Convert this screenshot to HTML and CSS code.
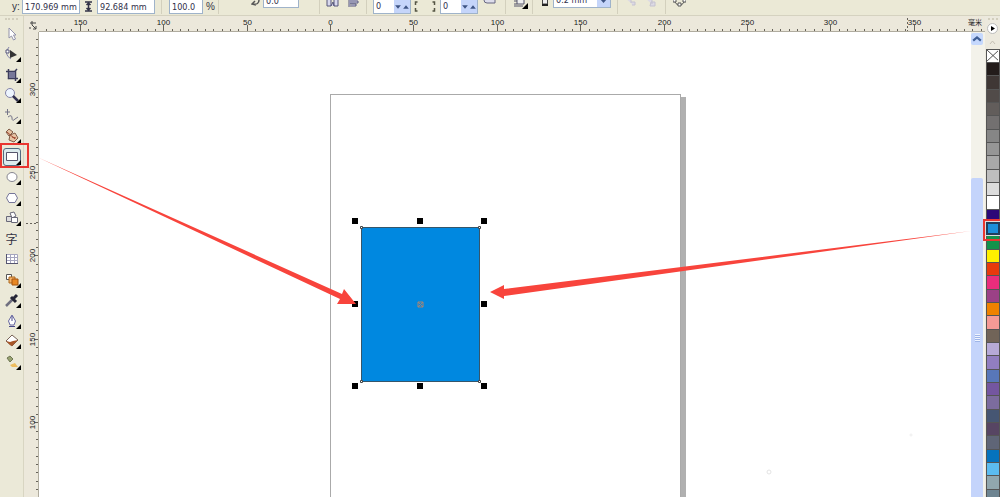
FILE: index.html
```html
<!DOCTYPE html>
<html lang="zh-CN">

<head>
    <meta charset="UTF-8">
    <meta name="viewport" content="width=device-width, initial-scale=1.0">
    <title>CorelDRAW</title>
    <link rel="stylesheet" href="styles.css">
</head>

<body>
    <header class="property-bar">
        <div class="group group-size">
            <label for="posY">y:</label>
            <input class="field" id="posY" value="170.969 mm">
            <svg class="icon-height" viewBox="0 0 9 11"><path d="M1 1h7M1 10h7M4.500 2v7M2.500 4l2-2 2 2M2.500 7l2 2 2-2" fill="none" stroke="#333348" stroke-width="1.500"/></svg>
            <input class="field" aria-label="Height" value="92.684 mm">
        </div>
        <div class="group group-scale">
            <input class="field field-scale" id="scale" value="100.0">
            <label for="scale">%</label>
        </div>
        <div class="group group-angle">
            <svg class="icon-rotate" viewBox="0 0 10 14"><path d="M2 2q6-1 6 4t-6 4M4 7l-3 3 4 1" fill="none" stroke="#555" stroke-width="1.500"/></svg>
            <input class="field field-angle" aria-label="Angle" value="0.0">
        </div>
        <div class="group group-mirror">
            <button class="bar-button" aria-label="Mirror horizontally"><svg viewBox="0 0 13 14"><path d="M1 3v8h4V3M12 3v8H8V3M5 11l2-4 1 4" fill="#d8d8ed" stroke="#57577b"/></svg></button>
            <button class="bar-button" aria-label="Mirror vertically"><svg viewBox="0 0 13 14"><path d="M2 12V4h10M3 6h8v2H3M3 11h6V9H3" fill="#d8d8ed" stroke="#57577b"/></svg></button>
        </div>
        <div class="group group-corner">
            <div class="spin">
                <input class="field" aria-label="Left corner" value="0">
                <button aria-label="Less"><svg viewBox="0 0 7 7"><path d="M1 2l2.500 3L6 2z"/></svg></button>
                <button aria-label="More"><svg viewBox="0 0 7 7"><path d="M1 5l2.500-3L6 5z"/></svg></button>
            </div>
            <svg class="icon-corners" viewBox="0 0 26 14"><path d="M5 2H3v3M3 8v3h2M20 2h2v3M22 8v3h-2" fill="none" stroke="#555544" stroke-width="1.500"/></svg>
            <div class="spin">
                <input class="field" aria-label="Right corner" value="0">
                <button aria-label="Less"><svg viewBox="0 0 7 7"><path d="M1 2l2.500 3L6 2z"/></svg></button>
                <button aria-label="More"><svg viewBox="0 0 7 7"><path d="M1 5l2.500-3L6 5z"/></svg></button>
            </div>
            <button class="bar-button" aria-label="Round together"><svg viewBox="0 0 13 14"><path d="M1 3v2q0 3 3 3h8V3z" fill="#ddddeb" stroke="#666680"/></svg></button>
        </div>
        <div class="group group-wrap">
            <button class="bar-button" aria-label="Wrap text"><svg viewBox="0 0 15 14"><path d="M1 3h12M1 6h3M1 9h3M1 11h9" stroke="#55556a"/><path d="M4 4h7v5H4z" fill="#eee" stroke="#55556a"/><path d="M15 8v6H9z"/></svg></button>
        </div>
        <div class="group group-outline">
            <svg class="icon-pen" viewBox="0 0 8 14"><path d="M1.500 10V5h5v5z" fill="#eee" stroke="#444"/><path d="M1 11h6" stroke="#222" stroke-width="2"/></svg>
            <div class="select-wrap">
                <select class="field" aria-label="Outline width"><option>0.2 mm</option></select>
                <svg viewBox="0 0 13 13"><path d="M3 5l3.500 4L10 5z"/></svg>
            </div>
        </div>
        <div class="group group-order">
            <button class="bar-button" aria-label="To front"><svg viewBox="0 0 13 14"><path d="M1 3h6v5M7 7h4v3H8" fill="#dcd9e4" stroke="#c5c2d0"/></svg></button>
            <button class="bar-button" aria-label="To back"><svg viewBox="0 0 13 14"><path d="M2 4h6v5M7 7h4v4H6z" fill="#dcd9e4" stroke="#c5c2d0"/></svg></button>
        </div>
        <div class="group group-curves">
            <button class="bar-button" aria-label="Convert to curves"><svg viewBox="0 0 13 14"><circle cx="6.500" cy="5" r="5" fill="none" stroke="#555"/><path d="M5 8h3v3H5zM0 4h3v3H0zM10 4h3v3h-3z" fill="#fff" stroke="#555"/></svg></button>
        </div>
    </header>

    <main class="workspace">
        <nav class="toolbox" aria-label="Toolbox">
            <div class="grip"></div>
            <button class="tool" aria-label="Pick"><svg viewBox="0 0 16 16"><path d="M5 2v10l2.500-2 2 4 2-1-2-4H12z" fill="#fff" stroke="#9292aa"/></svg></button>
            <button class="tool flyout" aria-label="Shape"><svg viewBox="0 0 16 16"><path d="M5 1q-6 7 2 12" fill="none" stroke="#8585aa"/><path d="M2 4h3v3H2z" fill="#fff" stroke="#555578"/><path d="M6 4v8l7-3z" fill="#333"/></svg></button>
            <button class="tool flyout" aria-label="Crop"><svg viewBox="0 0 16 16"><path d="M4.500 2v9.500H14M2 4.500h9.500V14M4 12l9-10" fill="none" stroke="#3d3d5c" stroke-width="1.500"/><path d="M5 5h6v6H5z" fill="#777799"/></svg></button>
            <button class="tool flyout" aria-label="Zoom"><svg viewBox="0 0 16 16"><circle cx="6" cy="6" r="4.500" fill="#edf5ff" stroke="#8383a8"/><path d="M9 9l5 5" stroke="#333352" stroke-width="2.500"/></svg></button>
            <button class="tool flyout" aria-label="Freehand"><svg viewBox="0 0 16 16"><path d="M1 4h5M3.500 1v6M4 9q4-3 4 1t3 1l3-2" fill="none" stroke="#747488"/></svg></button>
            <button class="tool flyout" aria-label="Smart fill"><svg viewBox="0 0 16 16"><path d="M2 4l3-3 4 3-4 4zM6 7l5-2 3 5-4 4-5-2z" fill="#e7c4a4" stroke="#805c48"/><path d="M3 4l8 7M8 9l4 1" stroke="#a04730"/></svg></button>
            <button class="tool flyout selected" aria-label="Rectangle"><svg viewBox="0 0 16 16"><path d="M2.500 3.500h11v8h-11z" fill="#fff" stroke="#55556c"/></svg></button>
            <button class="tool flyout" aria-label="Ellipse"><svg viewBox="0 0 16 16"><ellipse cx="8" cy="8" rx="5" ry="4.500" fill="#fff" stroke="#85858f"/></svg></button>
            <button class="tool flyout" aria-label="Polygon"><svg viewBox="0 0 16 16"><path d="M5 3.500h6l2.500 4.500-2.500 4.500H5L2.500 8z" fill="#fff" stroke="#77779a"/></svg></button>
            <button class="tool flyout" aria-label="Basic shapes"><svg viewBox="0 0 16 16"><path d="M2.500 6.500h5v5h-5z" fill="#ddd" stroke="#686878"/><path d="M6 3l4-1 2 4-4 2z" fill="#fff" stroke="#686878"/><path d="M7.500 7.500h6v5h-6z" fill="#fff" stroke="#686878"/></svg></button>
            <button class="tool tool-text" aria-label="Text">字</button>
            <button class="tool" aria-label="Table"><svg viewBox="0 0 16 16"><path d="M2.500 3.500h11v9h-11zM2.500 6.500h11M2.500 9.500h11M6.500 3.500v9M10.500 3.500v9" fill="#fff" stroke="#a5a5be"/><path d="M2.500 3v10M2 12.500h12" stroke="#555570"/></svg></button>
            <button class="tool flyout" aria-label="Blend"><svg viewBox="0 0 16 16"><path d="M2.500 2.500h5v5h-5z" fill="#fff" stroke="#555"/><path d="M5 5h6v6H5z" fill="#f3b268" stroke="#ac681f"/><path d="M8 7h6v6H8z" fill="#e88722" stroke="#a4540e"/></svg></button>
            <button class="tool flyout" aria-label="Eyedropper"><svg viewBox="0 0 16 16"><path d="M2 14l7-7" stroke="#707080" stroke-width="2.500"/><path d="M7 5l5 5M9 7l4-4" stroke="#252535" stroke-width="3"/></svg></button>
            <button class="tool flyout" aria-label="Outline"><svg viewBox="0 0 16 16"><path d="M8 2l3.500 6-1.500 4H6L4.500 8z" fill="#fff" stroke="#6666a0"/><path d="M8 3v5M5 13.500h6" stroke="#484888"/></svg></button>
            <button class="tool flyout" aria-label="Fill"><svg viewBox="0 0 16 16"><path d="M2 8l6-6 6 5-6 6z" fill="#fff" stroke="#776257"/><path d="M2 8l4 4 2 1 6-6-5 1-3 1z" fill="#a85728"/></svg></button>
            <button class="tool flyout" aria-label="Interactive fill"><svg viewBox="0 0 16 16"><path d="M3 4l3-2 3 3-3 3z" fill="#98a271" stroke="#6e7653"/><path d="M6 11l5-2 3 4H8z" fill="#edbd60"/></svg></button>
        </nav>

        <section class="document">
            <div class="ruler ruler-top">
                <svg class="ruler-scale" id="rulerX"></svg>
                <svg class="origin" viewBox="0 0 9 9"><path d="M1 2h4M3 0v4M3 4l4 4M7 5v3H4M6 1v2M1 6v2" fill="none" stroke="#444"/></svg>
                <span class="unit">毫米</span>
            </div>
            <div class="ruler ruler-left">
                <svg class="ruler-scale" id="rulerY"></svg>
            </div>
            <div class="canvas">
                <div class="page"></div>
                <div class="shape">
                    <svg viewBox="0 0 135 171">
                        <rect x="9.500" y="9.500" width="118" height="154" fill="#0088e0" stroke="#35566b"/>
                        <path d="M8.500 8.500h2v2h-2zM126.500 8.500h2v2h-2zM8.500 162.500h2v2h-2zM126.500 162.500h2v2h-2z" fill="#fff" stroke="#444"/>
                        <path d="M0 0h6v6H0zM65 0h6v6h-6zM129 0h6v6h-6zM0 83h6v6H0zM129 83h6v6h-6zM0 165h6v6H0zM65 165h6v6h-6zM129 165h6v6h-6z"/>
                        <path d="M66 84l5 5M71 84l-5 5M66 84h5v5h-5z" stroke="#a68474" stroke-width="1" fill="none"/>
                    </svg>
                </div>
                <svg class="specks" viewBox="0 0 150 45"><circle cx="4" cy="40" r="2" fill="none" stroke="#e4e4e4"/><circle cx="146" cy="3" r="1" fill="none" stroke="#eee"/></svg>
            </div>
            <div class="scrollbar">
                <button class="scroll-up" aria-label="Scroll up"><svg viewBox="0 0 11 11"><path d="M2 7l3.500-3L9 7" fill="none" stroke="#3e5e95" stroke-width="2"/></svg></button>
                <div class="scroll-thumb"></div>
            </div>
        </section>

        <aside class="palette" aria-label="Colours">
            <div class="grip"></div>
            <button class="palette-menu" aria-label="Palette menu"><svg viewBox="0 0 11 11"><circle cx="5.500" cy="5.500" r="5" fill="#fff" stroke="#bbb"/><path d="M4 3v5l4-2.500z"/></svg></button>
            <button class="palette-up" aria-label="Previous colours"><svg viewBox="0 0 9 7"><path d="M2 5l2.500-3L7 5" fill="none" stroke="#c4bfb4"/></svg></button>
            <button class="swatch" aria-label="No colour"><svg viewBox="0 0 13 12"><path d="M0 0l13 12M13 0L0 12" stroke="#444"/></svg></button>
        </aside>

        <svg class="arrows">
            <path d="M37 157L342 294l2-5 12 15-19 0 3-5z" fill="#f8443c"/>
            <path d="M971 231L504 296l0 3-14-7 14-7v4z" fill="#f8443c"/>
        </svg>
    </main>

    <script>
        const SVG_NS = "http://www.w3.org/2000/svg";
        const STEP = 417 / 50;   // pixels for 5 mm

        function addLine(svg, x1, y1, x2, y2, dash) {
            const line = document.createElementNS(SVG_NS, "line");
            line.setAttribute("x1", x1);
            line.setAttribute("y1", y1);
            line.setAttribute("x2", x2);
            line.setAttribute("y2", y2);
            if (dash) line.setAttribute("stroke-dasharray", "2 2");
            svg.appendChild(line);
        }

        function addLabel(svg, x, y, text, rotated) {
            const label = document.createElementNS(SVG_NS, "text");
            label.setAttribute("x", x);
            label.setAttribute("y", y);
            label.textContent = text;
            if (rotated) label.setAttribute("transform", `rotate(-90 ${x} ${y})`);
            svg.appendChild(label);
        }

        function drawRulers() {
            const rulerX = document.getElementById("rulerX");
            const rulerY = document.getElementById("rulerY");
            rulerX.replaceChildren();
            rulerY.replaceChildren();

            for (let i = -34; 306 + i * STEP < rulerX.clientWidth; i++) {
                const x = Math.round(306 + i * STEP) + 0.5;
                const major = i % 10 === 0;
                addLine(rulerX, x, major ? 9 : 13, x, 15);
                if (major) addLabel(rulerX, x, 9, Math.abs(i * 5));
            }
            addLine(rulerX, 883.5, 2, 883.5, 15, true);

            for (let i = 66; 557 - i * STEP < rulerY.clientHeight; i--) {
                const y = Math.round(557 - i * STEP) + 0.5;
                const major = i % 10 === 0;
                addLine(rulerY, major ? 10 : 12, y, 14, y);
                if (major) addLabel(rulerY, 11, y, i * 5, true);
            }
            addLine(rulerY, 2, 191.5, 15, 191.5, true);
        }

        const colors = [
            "#231c1b", "#3f3735", "#514b49", "#625d5b", "#737070", "#868686", "#969696", "#a8a8a8",
            "#bebebe", "#dcdcdc", "#ffffff", "#2c0878", "#1c8fda", "#14924b", "#fff000", "#e83a0c",
            "#ea2d7c", "#9b4186", "#ef8200", "#f59a96", "#716458", "#b6aad7", "#917ec0", "#5877b9",
            "#7456a0", "#7c6c9e", "#465673", "#574563", "#5f6577", "#0673bd", "#5cbcf0", "#91a7ae",
            "#6d8491"
        ];
        const palette = document.querySelector(".palette");
        colors.forEach(color => {
            const swatch = document.createElement("button");
            swatch.className = color === "#1c8fda" ? "swatch current" : "swatch";
            swatch.style.backgroundColor = color;
            swatch.setAttribute("aria-label", color);
            palette.appendChild(swatch);
        });

        drawRulers();
        window.addEventListener("resize", drawRulers);
    </script>
</body>

</html>
```
FILE: styles.css
```css
* {
    margin: 0;
    padding: 0;
    box-sizing: border-box;
}

body {
    display: flex;
    flex-direction: column;
    height: 100vh;
    overflow: hidden;
    font-family: "Liberation Sans", Arial, "Noto Sans CJK SC", sans-serif;
    font-size: 10px;
    color: #333344;
    background: #ece9d8;
}

button {
    border: none;
    background: none;
    font: inherit;
    color: inherit;
}

svg {
    display: block;
}

/* Property bar */
.property-bar {
    display: flex;
    flex: none;
    height: 16px;
    overflow: hidden;
    background: #ebe9d6;
    border-bottom: 1px solid #d5d2c0;
}

.group {
    display: flex;
    flex: none;
    align-items: flex-start;
    height: 14px;
    border-right: 1px solid #d3d0bd;
}

.group label {
    line-height: 14px;
}

.field {
    width: 58px;
    height: 14px;
    padding: 0 2px;
    border: 1px solid #9fb3ca;
    border-top: none;
    background: #fff;
    font-family: "DejaVu Sans Condensed", "DejaVu Sans", sans-serif;
    font-size: 9px;
    line-height: 13px;
    color: #30304a;
}

.group-size {
    width: 162px;
    padding-left: 12px;
}

.group-size label {
    width: 10px;
}

.icon-height {
    width: 9px;
    height: 11px;
    margin: 1px 4px;
}

.group-scale {
    width: 57px;
    padding-left: 7px;
    gap: 3px;
}

.field-scale {
    width: 34px;
}

.group-angle {
    width: 101px;
    padding-left: 32px;
    gap: 2px;
}

.icon-rotate {
    width: 10px;
    height: 14px;
    margin-top: -6px;
}

.field-angle {
    width: 36px;
    margin-top: -6px;
}

.bar-button {
    width: 13px;
    height: 14px;
    margin-top: -5px;
}

.group-mirror {
    width: 47px;
    padding-left: 6px;
    gap: 8px;
}

.group-corner {
    width: 139px;
    padding-left: 6px;
}

.group-corner .bar-button {
    margin-left: 5px;
}

.spin {
    display: flex;
    width: 38px;
    height: 14px;
    border: 1px solid #9fb3ca;
    border-top: none;
    background: #fff;
}

.spin .field {
    width: 20px;
    height: 13px;
    border: none;
}

.spin button {
    width: 8px;
    background: #c5d5fa;
}

.spin path,
.select-wrap path {
    fill: #3e5484;
}

.icon-corners {
    width: 29px;
    height: 14px;
}

.group-wrap {
    width: 27px;
    padding-left: 7px;
}

.group-wrap .bar-button {
    width: 15px;
}

.group-outline {
    width: 85px;
    padding-left: 8px;
    gap: 4px;
}

.icon-pen {
    width: 8px;
    height: 14px;
    margin-top: -6px;
}

.select-wrap {
    position: relative;
    margin-top: -6px;
}

.select-wrap select {
    appearance: none;
    border-radius: 0;
}

.select-wrap svg {
    position: absolute;
    right: 1px;
    top: 0;
    width: 13px;
    height: 13px;
    background: #c5d5fa;
    pointer-events: none;
}

.group-order {
    width: 48px;
    padding-left: 6px;
    gap: 7px;
}

.group-curves {
    padding-left: 7px;
    border: none;
}

/* Toolbox */
.workspace {
    position: relative;
    display: flex;
    flex: 1;
    min-height: 0;
}

.grip {
    flex: none;
    width: 13px;
    height: 2px;
    border-top: 2px dotted #d2cebd;
}

.toolbox {
    display: flex;
    flex-direction: column;
    flex: none;
    align-items: center;
    width: 24px;
    padding-top: 2px;
    background: #ebe9d8;
    border-right: 1px solid #d8d5c2;
}

.toolbox .grip {
    margin-bottom: 3px;
}

.tool {
    position: relative;
    display: flex;
    flex: none;
    align-items: center;
    justify-content: center;
    width: 20px;
    height: 20px;
}

.tool:nth-child(2n) {
    height: 21px;
}

.tool svg {
    width: 16px;
    height: 16px;
}

.flyout::after {
    content: "";
    position: absolute;
    right: 1px;
    bottom: 2px;
    border-left: 5px solid transparent;
    border-bottom: 5px solid #000;
}

.tool-text {
    font-family: "Noto Sans CJK SC", sans-serif;
    font-size: 12px;
    line-height: 16px;
}

.tool.selected svg {
    width: 18px;
    height: 18px;
    border: 1px solid #526b80;
    border-radius: 3px;
    background: #dcebed;
}

/* Red frames round the tool and the colour */
.selected::before,
.current::before {
    content: "";
    position: absolute;
    border: 2px solid #e93630;
    z-index: 2;
}

.selected::before {
    inset: -3px -7px -1px -2px;
}

/* Document */
.document {
    display: grid;
    flex: 1;
    grid-template-columns: 15px 1fr 14px;
    grid-template-rows: 16px 1fr;
    min-width: 0;
}

.ruler {
    position: relative;
    background: #ece8db;
}

.ruler-top {
    display: flex;
    grid-column: 1 / 4;
    justify-content: space-between;
}

.ruler-top::after {
    content: "";
    position: absolute;
    left: 15px;
    right: 0;
    bottom: 0;
    border-bottom: 1px solid #b0ac9f;
}

.ruler-left {
    border-right: 1px solid #b0ac9f;
}

.ruler-scale {
    position: absolute;
    inset: 0;
    width: 100%;
    height: 100%;
}

.ruler-scale line {
    stroke: #66625a;
}

.ruler-scale text {
    font-size: 8px;
    text-anchor: middle;
    fill: #222;
}

.origin {
    width: 9px;
    height: 9px;
    margin: 5px;
}

.unit {
    position: relative;
    padding-right: 3px;
    font-family: "Noto Sans CJK SC", sans-serif;
    font-size: 7px;
    line-height: 12px;
    color: #222;
}

.canvas {
    position: relative;
    overflow: hidden;
    background: #fff;
}

.page {
    position: absolute;
    left: 291px;
    top: 62px;
    bottom: -10px;
    width: 351px;
    border: 1px solid #aaa;
    box-shadow: 5px 3px 0 #b0b0b0;
    background: #fff;
}

.shape {
    position: absolute;
    left: 313px;
    top: 186px;
    width: 135px;
    height: 171px;
}

.specks {
    position: absolute;
    left: 726px;
    top: 400px;
    width: 150px;
    height: 45px;
}

.scrollbar {
    display: flex;
    flex-direction: column;
    align-items: flex-start;
    padding-top: 1px;
    background: #f3f2ea;
}

.scroll-up {
    width: 12px;
    height: 12px;
    border-radius: 2px;
    background: #c5d8fd;
}

.scroll-thumb {
    display: flex;
    flex: 1;
    align-items: center;
    justify-content: center;
    width: 12px;
    margin-top: 133px;
    border-radius: 2px 2px 0 0;
    background: #c4d4fb;
}

.scroll-thumb::after {
    content: "";
    width: 5px;
    height: 8px;
    background: repeating-linear-gradient(#eff4ff 0 1px, #9eb5e8 1px 2px);
}

/* Colour palette */
.palette {
    display: flex;
    flex-direction: column;
    flex: none;
    align-items: center;
    width: 15px;
    padding-top: 2px;
    background: #ece9de;
}

.palette .grip {
    width: 10px;
}

.palette-menu {
    width: 11px;
    height: 11px;
    margin-top: 3px;
}

.palette-up {
    width: 9px;
    height: 7px;
    margin: 5px 0 3px;
}

.swatch {
    position: relative;
    flex: none;
    width: 14px;
    height: 13px;
    border: 1px solid #555;
    border-bottom: none;
    background: #fff;
}

.swatch:nth-child(3n) {
    height: 14px;
}

.swatch.current {
    border: 2px solid #223e5c;
    outline: 1px solid #ddd;
    z-index: 1;
}

.current::before {
    inset: -5px -4px -8px -5px;
}

.arrows {
    position: absolute;
    left: 0;
    top: -16px;
    width: 100%;
    height: calc(100% + 16px);
    pointer-events: none;
}
```
